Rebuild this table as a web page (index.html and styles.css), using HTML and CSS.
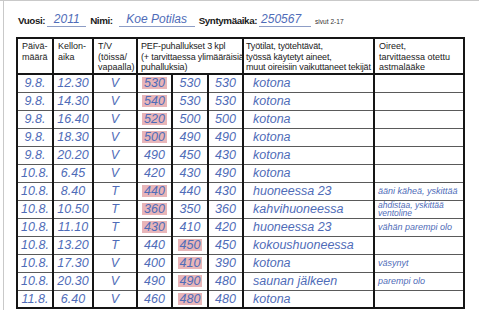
FILE: index.html
```html
<!DOCTYPE html>
<html lang="fi">
<head>
<meta charset="utf-8">
<title>PEF-seuranta</title>
<link rel="stylesheet" href="styles.css">
</head>
<body>
<div class="frame">
  <div class="meta">
    <span class="label">Vuosi:</span>
    <span class="fill fill-year">2011</span>
    <span class="label">Nimi:</span>
    <span class="fill fill-name">Koe Potilas</span>
    <span class="label">Syntymäaika:</span>
    <span class="fill fill-birth">250567</span>
    <span class="pages">sivut 2-17</span>
  </div>
  <table class="log">
    <colgroup>
      <col class="c-date"><col class="c-time"><col class="c-tv">
      <col class="c-pef"><col class="c-pef2"><col class="c-pef">
      <col class="c-work"><col class="c-sym">
    </colgroup>
    <thead>
      <tr>
        <th>Päivä-<br>määrä</th>
        <th>Kellon-<br>aika</th>
        <th>T/V<br>(töissä/<br>vapaalla)</th>
        <th colspan="3" class="th-pef">PEF-puhallukset 3 kpl<br>(+ tarvittaessa ylimääräisiä<br>puhalluksia)</th>
        <th class="th-work">Työtilat, työtehtävät,<br>työssä käytetyt aineet,<br>muut oireisiin vaikuttaneet tekijät</th>
        <th>Oireet,<br>tarvittaessa otettu<br>astmalääke</th>
      </tr>
    </thead>
    <tbody>
      <tr><td>9.8.</td><td>12.30</td><td>V</td><td><span class="hl">530</span></td><td>530</td><td>530</td><td class="work">kotona</td><td class="sym"></td></tr>
      <tr><td>9.8.</td><td>14.30</td><td>V</td><td><span class="hl">540</span></td><td>530</td><td>530</td><td class="work">kotona</td><td class="sym"></td></tr>
      <tr><td>9.8.</td><td>16.40</td><td>V</td><td><span class="hl">520</span></td><td>500</td><td>500</td><td class="work">kotona</td><td class="sym"></td></tr>
      <tr><td>9.8.</td><td>18.30</td><td>V</td><td><span class="hl">500</span></td><td>490</td><td>490</td><td class="work">kotona</td><td class="sym"></td></tr>
      <tr><td>9.8.</td><td>20.20</td><td>V</td><td>490</td><td>450</td><td>430</td><td class="work">kotona</td><td class="sym"></td></tr>
      <tr><td>10.8.</td><td>6.45</td><td>V</td><td>420</td><td>430</td><td>490</td><td class="work">kotona</td><td class="sym"></td></tr>
      <tr><td>10.8.</td><td>8.40</td><td>T</td><td><span class="hl">440</span></td><td>440</td><td>430</td><td class="work">huoneessa 23</td><td class="sym">ääni käheä, yskittää</td></tr>
      <tr><td>10.8.</td><td>10.50</td><td>T</td><td><span class="hl">360</span></td><td>350</td><td>360</td><td class="work">kahvihuoneessa</td><td class="sym sym-two">ahdistaa, yskittää<br>ventoline</td></tr>
      <tr><td>10.8.</td><td>11.10</td><td>T</td><td><span class="hl">430</span></td><td>410</td><td>420</td><td class="work">huoneessa 23</td><td class="sym">vähän parempi olo</td></tr>
      <tr><td>10.8.</td><td>13.20</td><td>T</td><td>440</td><td><span class="hl">450</span></td><td>450</td><td class="work">kokoushuoneessa</td><td class="sym"></td></tr>
      <tr><td>10.8.</td><td>17.30</td><td>V</td><td>400</td><td><span class="hl">410</span></td><td>390</td><td class="work">kotona</td><td class="sym">väsynyt</td></tr>
      <tr><td>10.8.</td><td>20.30</td><td>V</td><td>490</td><td><span class="hl">490</span></td><td>480</td><td class="work">saunan jälkeen</td><td class="sym">parempi olo</td></tr>
      <tr><td>11.8.</td><td>6.40</td><td>V</td><td>460</td><td><span class="hl">480</span></td><td>480</td><td class="work">kotona</td><td class="sym"></td></tr>
    </tbody>
  </table>
</div>
</body>
</html>
```
FILE: styles.css
```css
html, body {
  margin: 0;
  padding: 0;
  background: #ffffff;
}
body {
  width: 479px;
  height: 310px;
  overflow: hidden;
  border-top: 1px solid #c9c9c9;
  box-sizing: border-box;
  font-family: "Liberation Sans", Arial, sans-serif;
  color: #1e1e1e;
}
.frame {
  margin-left: 3px;
  border-left: 1px solid #c9c9c9;
  height: 309px;
}
.meta {
  display: flex;
  align-items: flex-end;
  height: 36px;
  box-sizing: border-box;
  padding: 0 0 11px 14px;
}
.label {
  font-weight: bold;
  font-size: 9.8px;
  letter-spacing: -0.4px;
  line-height: 11px;
  color: #1a1a1a;
  margin-right: 2px;
}
.fill {
  display: block;
  font-style: italic;
  font-size: 12px;
  line-height: 13px;
  color: #4f6cb8;
  border-bottom: 1px solid #8d9dc6;
  text-align: center;
  margin-right: 4px;
  margin-bottom: -1px;
}
.fill-year { width: 39px; }
.fill-name { width: 76px; margin-left: 4px; }
.fill-birth { width: 52px; text-align: left; padding-left: 2px; box-sizing: border-box; }
.pages {
  font-size: 6.6px;
  line-height: 8px;
  color: #333;
}
.log {
  margin-left: 12px;
  border-collapse: collapse;
  table-layout: fixed;
  width: 447px;
  border: 2px solid #151515;
}
.c-date { width: 36px; }
.c-time { width: 40px; }
.c-tv { width: 44px; }
.c-pef { width: 35px; }
.c-pef2 { width: 36px; }
.c-work { width: 131px; }
.c-sym { width: 90px; }
.log th {
  height: 36px;
  box-sizing: border-box;
  padding: 2px 0 0 4px;
  vertical-align: top;
  text-align: left;
  font-weight: normal;
  font-size: 9px;
  line-height: 10.5px;
  color: #222;
  border: 2px solid #151515;
  white-space: nowrap;
  overflow: hidden;
}
.log th.th-pef {
  padding-left: 3px;
  letter-spacing: -0.15px;
}
.log th.th-work {
  padding-left: 2px;
  letter-spacing: -0.15px;
}
.log td {
  height: 18px;
  box-sizing: border-box;
  padding: 0;
  text-align: center;
  vertical-align: middle;
  font-style: italic;
  font-size: 12.5px;
  line-height: 14px;
  color: #4f6cb8;
  border-left: 2px solid #151515;
  border-right: 2px solid #151515;
  border-top: 1px solid #5a5a5a;
  border-bottom: 1px solid #5a5a5a;
  white-space: nowrap;
  overflow: hidden;
}
.log td.work {
  text-align: left;
  padding-left: 9px;
}
.log td.sym {
  text-align: left;
  padding-left: 3px;
  font-size: 9px;
}
.log td.sym-two {
  font-size: 8.5px;
  line-height: 8px;
  padding-top: 0;
}
.hl {
  display: inline-block;
  background: #e8b5b8;
  padding: 0 2px;
  line-height: 12px;
}
```
